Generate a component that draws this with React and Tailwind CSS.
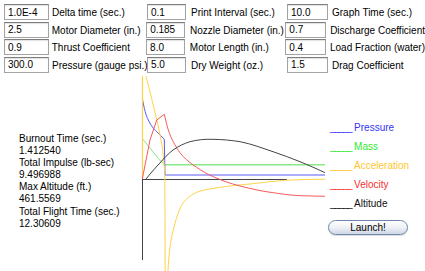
import React from 'react';

const rows = [
  [['1.0E-4', 'Delta time (sec.)'], ['0.1', 'Print Interval (sec.)'], ['10.0', 'Graph Time (sec.)']],
  [['2.5', 'Motor Diameter (in.)'], ['0.185', 'Nozzle Diameter (in.)'], ['0.7', 'Discharge Coefficient']],
  [['0.9', 'Thrust Coefficient'], ['8.0', 'Motor Length (in.)'], ['0.4', 'Load Fraction (water)']],
  [['300.0', 'Pressure (gauge psi.)'], ['5.0', 'Dry Weight (oz.)'], ['1.5', 'Drag Coefficient']],
];

const stats = [
  'Burnout Time (sec.)', '1.412540',
  'Total Impulse (lb-sec)', '9.496988',
  'Max Altitude (ft.)', '461.5569',
  'Total Flight Time (sec.)', '12.30609',
];

const legend = [
  { label: 'Pressure', cls: 'text-[#3434f2]' },
  { label: 'Mass', cls: 'text-[#2fe82f]' },
  { label: 'Acceleration', cls: 'text-[#ffc62e]' },
  { label: 'Velocity', cls: 'text-[#f52f2f]' },
  { label: 'Altitude', cls: 'text-[#111]' },
];

function Field({ value, width }) {
  return (
    <div className={`${width} h-[16px] border border-[#a3a3a3] border-t-[#7d7d7d] bg-white shadow-[inset_0_1px_1px_rgba(0,0,0,0.12)] pl-[3px] pt-[1px] flex items-center leading-none`}>
      {value}
    </div>
  );
}

function Graph() {
  return (
    <svg width="188" height="195" viewBox="140 76 188 195" className="shrink-0">
      {/* axes */}
      <line x1="142.5" y1="179" x2="142.5" y2="260" stroke="#444" strokeWidth="1" />
      <line x1="142" y1="179.5" x2="287" y2="179.5" stroke="#444" strokeWidth="1" />

      {/* mass */}
      <polyline fill="none" stroke="#8ae88a" strokeWidth="1"
        points="142,138 150,148 157,157 163.5,164 165,164.7" />
      <line x1="165" y1="164.7" x2="325" y2="164.7" stroke="#8ae88a" strokeWidth="1.6" />

      {/* pressure */}
      <path fill="none" stroke="#5a5af5" strokeWidth="1"
        d="M142.3,98 C144,108 146,116 148.3,120 C151,126 154,129 156.7,131.7 C159,134 162,136.5 164.3,139.3 L165,175 L325,175" />

      {/* acceleration */}
      <line x1="142.5" y1="76" x2="142.5" y2="179" stroke="#ffd24a" strokeWidth="1.2" />
      <path fill="none" stroke="#ffd24a" strokeWidth="1"
        d="M146,76 L152,100 L158,125 L162.5,148 L164.8,172 L165.2,271" />
      <path fill="none" stroke="#ffd24a" strokeWidth="1"
        d="M168,271 C169,252 170.5,240 173.3,230 C176,219 179,209 183,203 C190,194 198,191 207,189.5 C220,187 230,186 240,185 C260,183 275,181 287,180.2 C300,179.6 312,179.3 325,179.2" />

      {/* velocity */}
      <path fill="none" stroke="#f55a5a" strokeWidth="1"
        d="M142.3,179 L150,140 L156.7,120 L164.3,114.3 C166,121 167,126 168.3,130 C170,135 171.5,138.5 173.3,141.7 C177,149 180,153 183.3,156.7 C188,161 192,164.5 196.7,167.3 C202,171 207,174 213.3,176.7 C222,180.5 230,183.5 240,186 C252,189 262,191.3 273.3,192.7 C285,194.5 292,195.3 300,195.7 L325,196.3" />

      {/* altitude */}
      <path fill="none" stroke="#444" strokeWidth="1"
        d="M146,179 C150,174 155,168 160,163 C164,158 168,154 173,150 C179,146 184,143.5 190,141.7 C198,139.6 205,139.1 213,139.3 C222,139.5 231,140.2 240,141.7 C252,144 262,148 273,151.7 C282,154.8 291,158 300,161.7 C309,165.3 317,169 325,172.7" />
    </svg>
  );
}

export default function App() {
  return (
    <div className="w-[425px] h-[271px] bg-white text-black text-[10px] overflow-hidden" style={{ fontFamily: '"Liberation Sans", Arial, sans-serif' }}>
      {/* inputs */}
      <div className="h-[76px] pt-[4px] pl-[4px] flex flex-col gap-[1.6px]">
        {rows.map((row, i) => (
          <div key={i} className="flex items-center h-[16px]">
            <Field value={row[0][0]} width="w-[45px]" />
            <span className="w-[98px] pl-[3px] pt-[1px] whitespace-nowrap">{row[0][1]}</span>
            <Field value={row[1][0]} width="w-[39px]" />
            <span className="w-[101px] pl-[5px] pt-[1px] whitespace-nowrap">{row[1][1]}</span>
            <Field value={row[2][0]} width="w-[41px]" />
            <span className="pl-[4px] pt-[1px] whitespace-nowrap">{row[2][1]}</span>
          </div>
        ))}
      </div>

      {/* results + graph */}
      <div className="h-[195px] flex">
        <div className="w-[140px] pt-[57px] pl-[19px] leading-[12.1px] flex flex-col">
          {stats.map((s, i) => (
            <span key={i} className="whitespace-nowrap">{s}</span>
          ))}
        </div>
        <Graph />
        <div className="flex-1 pt-[46px] flex flex-col">
          <div className="flex flex-col gap-[7px] pl-[2px] leading-[12px]">
            {legend.map((l) => (
              <span key={l.label} className={`${l.cls} whitespace-nowrap`}>
                <span className="tracking-[-1.3px]">_____</span>&nbsp;{l.label}
              </span>
            ))}
          </div>
          <button className="mt-[10px] w-[80px] h-[15px] rounded-full border border-[#7088ad] bg-gradient-to-b from-white via-[#eef1f5] to-[#cfd8e6] shadow-[0_1px_1px_rgba(0,0,0,0.15)] text-[10px] leading-none text-black flex items-center justify-center">
            Launch!
          </button>
        </div>
      </div>
    </div>
  );
}
